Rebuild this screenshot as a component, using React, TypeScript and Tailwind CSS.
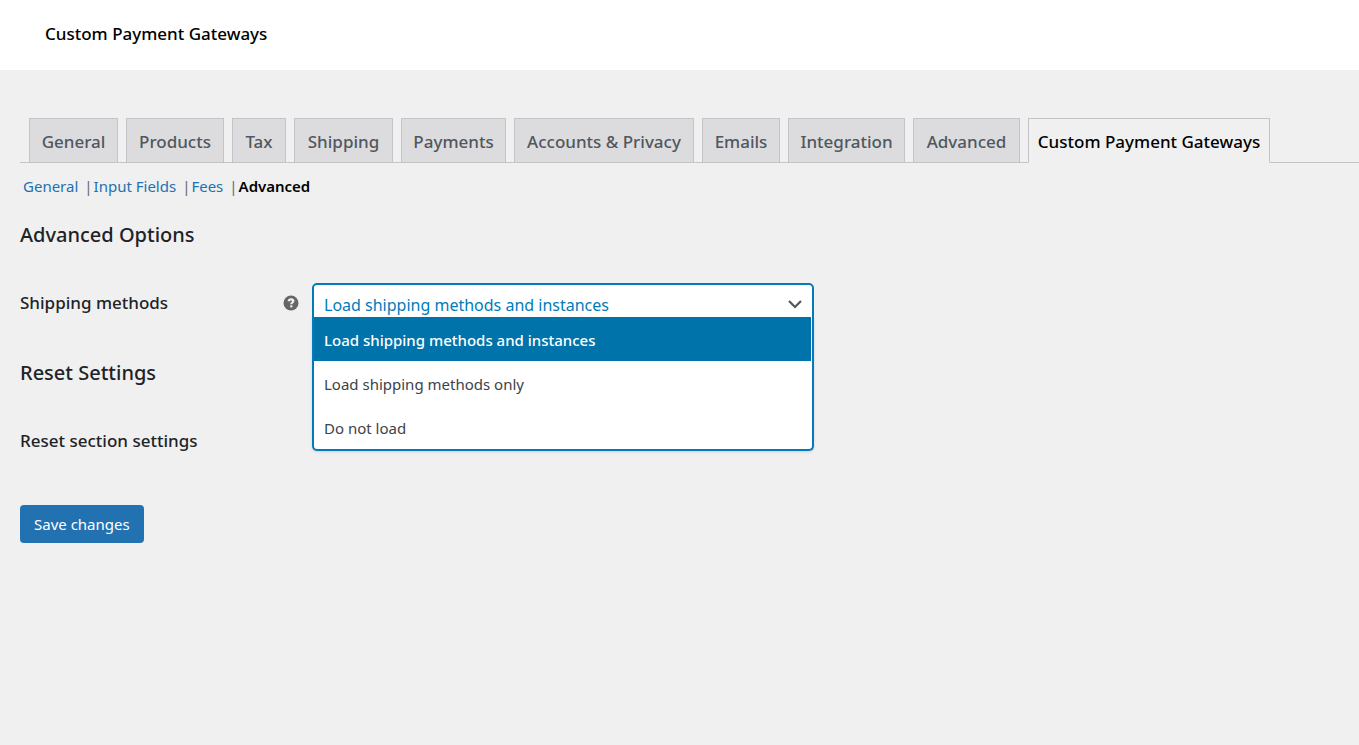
import { useState } from "react";
import { clsx } from "clsx";

const TABS = [
  { label: "General", width: "min-w-[89px]" },
  { label: "Products", width: "min-w-[98px]" },
  { label: "Tax", width: "min-w-[54px]" },
  { label: "Shipping", width: "min-w-[99px]" },
  { label: "Payments", width: "min-w-[105px]" },
  { label: "Accounts & Privacy", width: "min-w-[180px]" },
  { label: "Emails", width: "min-w-[78px]" },
  { label: "Integration", width: "min-w-[117px]" },
  { label: "Advanced", width: "min-w-[107px]" },
  { label: "Custom Payment Gateways", width: "min-w-[242px]" },
];

const SECTIONS = ["General", "Input Fields", "Fees", "Advanced"];

const SHIPPING_OPTIONS = [
  "Load shipping methods and instances",
  "Load shipping methods only",
  "Do not load",
];

function HelpTip() {
  return (
    <svg viewBox="0 0 16 16" className="size-4" role="img" aria-label="Help">
      <circle cx="8" cy="8" r="7.5" fill="#666" />
      <path
        d="M5.7 6.3C5.8 4.8 6.8 4.3 8.1 4.3c1.4 0 2.2.7 2.2 1.7 0 1.5-2 1.5-2 3.2"
        fill="none"
        stroke="#f0f0f1"
        strokeWidth="2.2"
      />
      <rect x="7.2" y="10.3" width="2.2" height="2.1" fill="#f0f0f1" />
    </svg>
  );
}

function NavTabs() {
  return (
    <nav className="flex gap-2 border-b border-[#c3c4c7] pl-[9px]">
      {TABS.map(({ label, width }) => {
        const active = label === "Custom Payment Gateways";
        return (
          <a
            key={label}
            href="#"
            className={clsx(
              "-mb-px flex h-[45px] shrink-0 items-center justify-center whitespace-nowrap border border-[#c3c4c7] pt-[3px] text-[17px] font-medium",
              width,
              active
                ? "border-b-[#f0f0f0] bg-[#f0f0f0] text-black"
                : "bg-[#dcdcde] text-[#50575e]"
            )}
          >
            {label}
          </a>
        );
      })}
    </nav>
  );
}

function SectionLinks() {
  return (
    <ul className="mt-[11px] flex pl-[3px] text-[15px] leading-6">
      {SECTIONS.map((section, i) => {
        const last = i === SECTIONS.length - 1;
        return (
          <li key={section} className="flex">
            <a
              href="#"
              className={last ? "font-semibold text-black" : "text-[#2271b1]"}
            >
              {section}
            </a>
            {!last && <span className="ml-[6px] mr-px text-[#646970]">|</span>}
          </li>
        );
      })}
    </ul>
  );
}

function ShippingSelect() {
  const [open, setOpen] = useState(true);
  const [selected, setSelected] = useState(0);

  return (
    <div className="relative w-[502px]">
      <button
        id="shipping-methods"
        type="button"
        role="combobox"
        aria-expanded={open}
        aria-controls="shipping-options"
        onClick={() => setOpen(!open)}
        className="flex h-[42px] w-full items-center justify-between rounded-[5px] border-2 border-[#007cba] bg-white pl-[10px] pr-[9px] text-base text-[#007cba]"
      >
        <span className="pt-[2px]">{SHIPPING_OPTIONS[selected]}</span>
        <svg viewBox="0 0 16 16" className="size-4" aria-hidden="true">
          <path
            d="M2 5l6 6 6-6"
            fill="none"
            stroke="#50575e"
            strokeWidth="2.2"
          />
        </svg>
      </button>
      {open && (
        <ul
          id="shipping-options"
          role="listbox"
          className="absolute inset-x-0 top-[34px] rounded-b-[5px] border-2 border-t-0 border-[#007cba] bg-white text-[15px] shadow-sm"
        >
          {SHIPPING_OPTIONS.map((option, i) => (
            <li
              key={option}
              role="option"
              aria-selected={i === selected}
              onClick={() => {
                setSelected(i);
                setOpen(false);
              }}
              className={clsx(
                "flex h-11 items-center pl-[10px] pt-[2px]",
                i === selected
                  ? "mr-px bg-[#0073aa] font-medium text-white"
                  : "text-[#3c434a]"
              )}
            >
              {option}
            </li>
          ))}
        </ul>
      )}
    </div>
  );
}

export default function App() {
  return (
    <div className="min-h-screen bg-[#f0f0f0] font-['Noto_Sans','Open_Sans',sans-serif] text-[#1d2327]">
      <header className="flex h-[70px] items-center bg-white px-[45px] pb-[2px]">
        <h1 className="text-[17px] font-medium text-black">
          Custom Payment Gateways
        </h1>
      </header>

      <main className="pl-5 pt-12">
        <NavTabs />
        <SectionLinks />

        <h2 className="mt-[23px] text-xl font-medium leading-7">
          Advanced Options
        </h2>
        <div className="mt-[34px] flex h-[42px] items-center">
          <label
            htmlFor="shipping-methods"
            className="w-[263px] pb-[2px] text-[17px] font-medium"
          >
            Shipping methods
          </label>
          <div className="w-[29px] pb-[2px]">
            <HelpTip />
          </div>
          <ShippingSelect />
        </div>

        <h2 className="mt-[34px] text-xl font-medium leading-7">
          Reset Settings
        </h2>
        <p className="mt-[42px] text-[17px] font-medium leading-6">
          Reset section settings
        </p>

        <button
          type="button"
          className="mt-[52px] h-[38px] rounded-[4px] bg-[#2271b1] px-[14px] text-[15px] text-white"
        >
          Save changes
        </button>
      </main>
    </div>
  );
}
